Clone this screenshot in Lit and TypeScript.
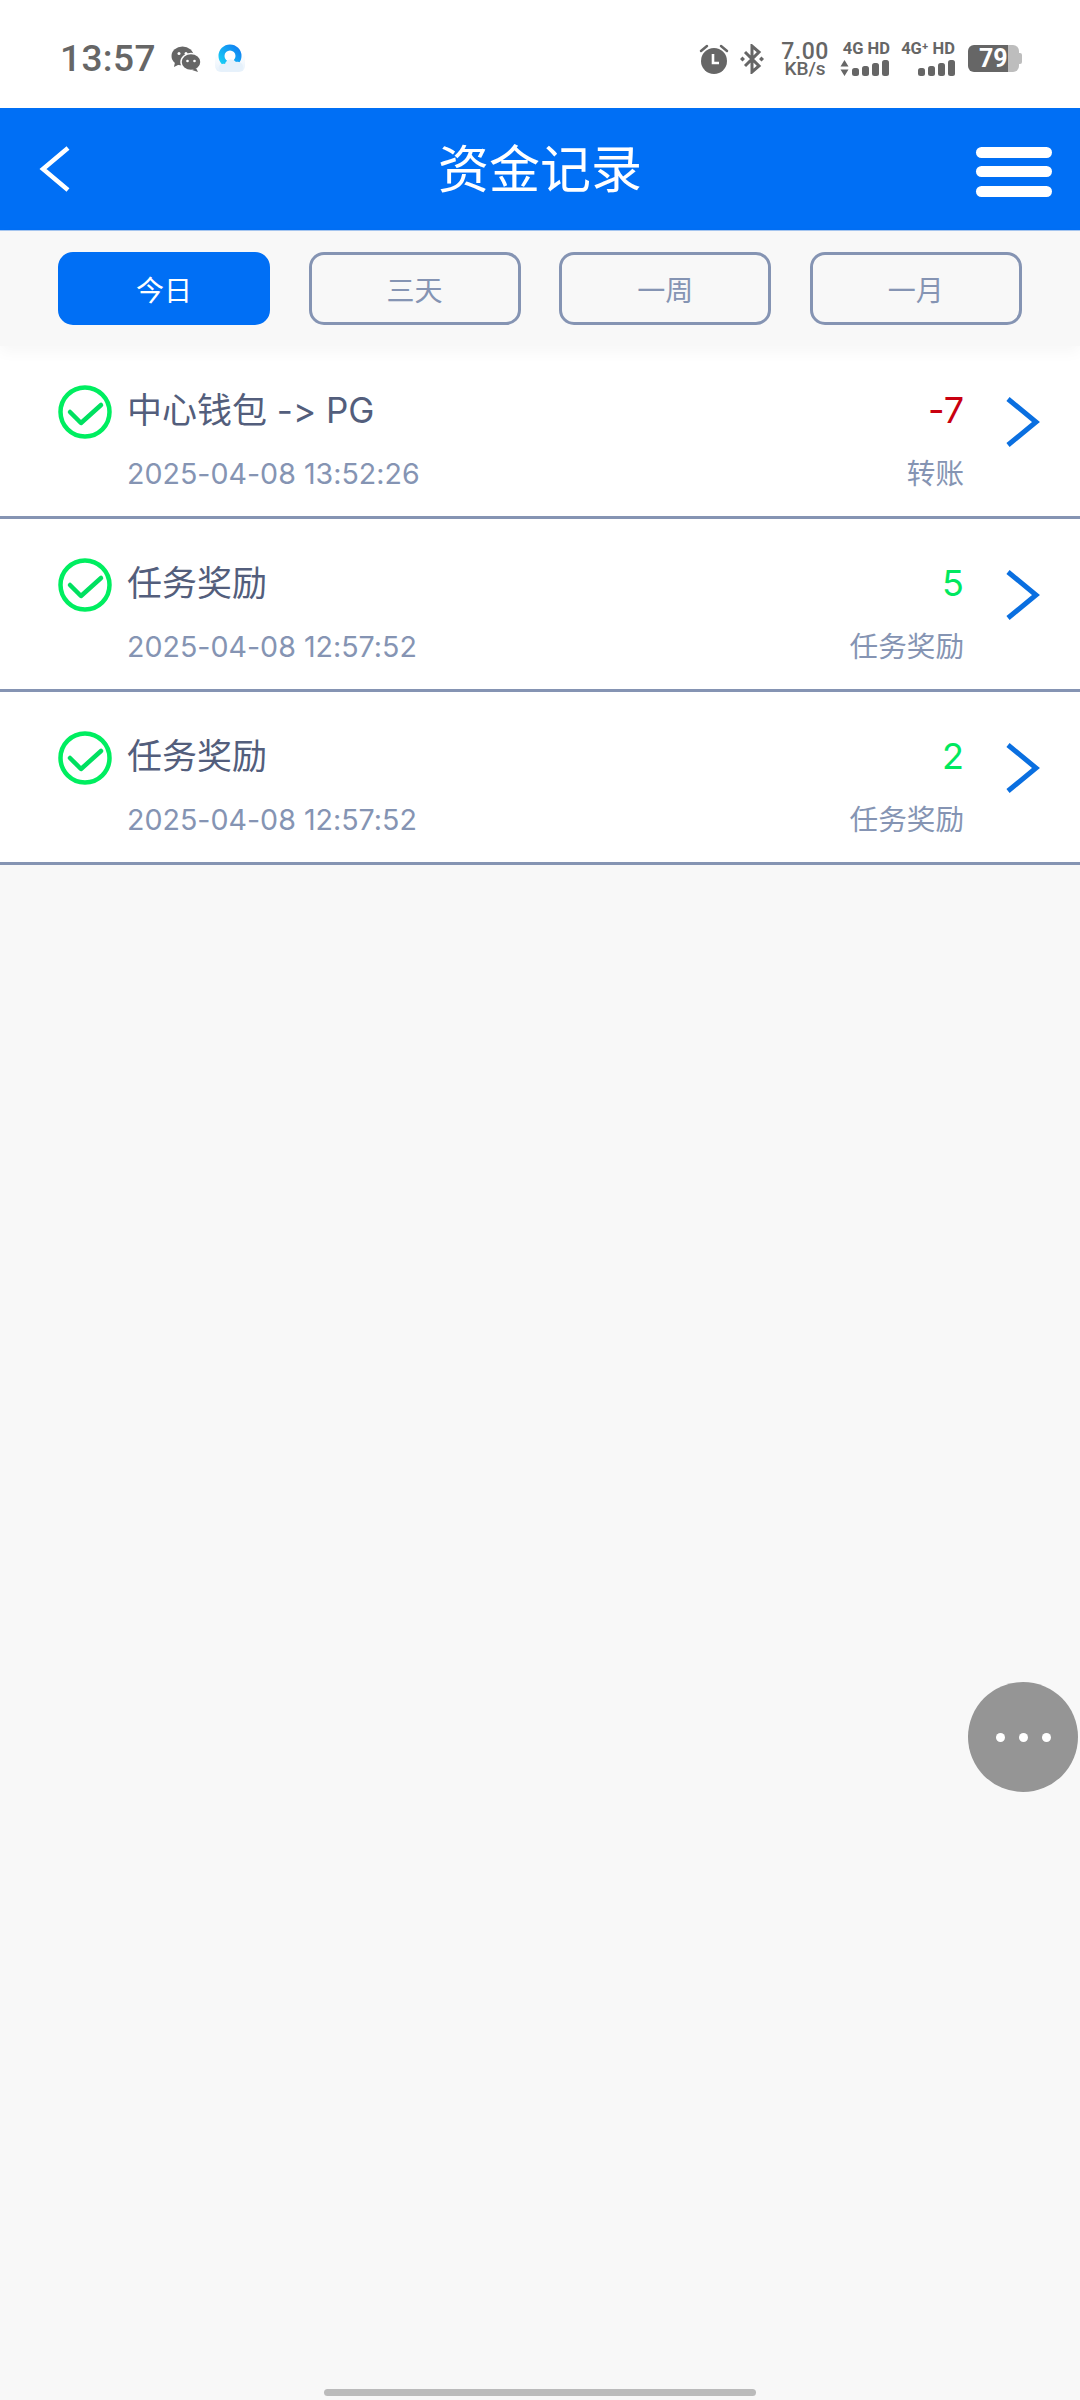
import { LitElement, html, css, svg } from 'lit';
import { customElement, state } from 'lit/decorators.js';
import { classMap } from 'lit/directives/class-map.js';

interface Rec {
  title: string;
  time: string;
  amount: string;
  kind: string;
  negative?: boolean;
}

const RECORDS: Rec[] = [
  { title: '中心钱包 -> PG', time: '2025-04-08 13:52:26', amount: '-7', kind: '转账', negative: true },
  { title: '任务奖励', time: '2025-04-08 12:57:52', amount: '5', kind: '任务奖励' },
  { title: '任务奖励', time: '2025-04-08 12:57:52', amount: '2', kind: '任务奖励' },
];

const TABS = ['今日', '三天', '一周', '一月'];

const bars = svg`
  <rect x="0" y="8" width="7" height="8" rx="2.5"></rect>
  <rect x="10" y="6" width="7" height="10" rx="2.5"></rect>
  <rect x="20" y="3" width="7" height="13" rx="2.5"></rect>
  <rect x="30" y="0" width="7" height="16" rx="2.5"></rect>
`;

@customElement('app-root')
export class AppRoot extends LitElement {
  static override styles = css`
    :host {
      display: flex;
      flex-direction: column;
      width: 1080px;
      height: 2400px;
      position: relative;
      overflow: hidden;
      background: #f8f8f8;
      font-family: Inter, 'Noto Sans CJK SC', sans-serif;
      /* Inter would turn "->" into an arrow */
      font-variant-ligatures: none;
      font-feature-settings: 'calt' 0, 'liga' 0;
    }

    /* status bar */
    .status {
      height: 108px;
      flex: none;
      box-sizing: border-box;
      background: #fff;
      display: flex;
      align-items: center;
      padding: 9px 58px 0 60px;
      color: #666;
    }
    .time {
      font-family: Roboto, sans-serif;
      font-size: 37px;
      font-weight: 500;
      width: 111px;
      line-height: 1;
      letter-spacing: 0.4px;
    }
    .wechat { width: 30px; height: 26px; margin-right: 14px; }
    .qq { width: 30px; height: 30px; margin-bottom: 3px; }
    .status-right { margin-left: auto; display: flex; align-items: center; }
    .alarm { width: 30px; height: 30px; margin-right: 9px; }
    .bt { width: 28px; height: 30px; margin-right: 15px; }
    .speed {
      display: flex;
      flex-direction: column;
      align-items: center;
      width: 48px;
      font-family: Roboto, sans-serif;
      color: #666;
      margin-right: 11px;
    }
    .speed b { font-size: 23px; font-weight: 500; line-height: 19px; letter-spacing: 0.5px; }
    .speed span { font-size: 19px; font-weight: 500; line-height: 15px; }
    .net {
      display: flex;
      flex-direction: column;
      align-items: flex-end;
      width: 50px;
      margin-right: 8px;
    }
    .net.second { width: 57px; margin-right: 13px; }
    .net span {
      font-family: Roboto, sans-serif;
      font-size: 16.5px;
      font-weight: 700;
      line-height: 16px;
      white-space: nowrap;
    }
    .net svg { display: block; margin-top: 3px; fill: #666; }
    .battery {
      position: relative;
      display: flex;
      width: 54px;
      height: 27px;
    }
    .battery .fill { width: 40px; background: #666; border-radius: 6px 0 0 6px; }
    .battery .rest { width: 11px; background: #bdbdbd; border-radius: 0 6px 6px 0; }
    .battery .cap {
      width: 3px;
      height: 11px;
      margin-top: 8px;
      background: #bdbdbd;
      border-radius: 0 2px 2px 0;
    }
    .battery span {
      position: absolute;
      left: 11px;
      top: 0;
      font-family: Roboto, sans-serif;
      font-size: 25px;
      font-weight: 700;
      line-height: 27px;
      color: #fff;
    }

    /* header */
    .header {
      height: 123px;
      flex: none;
      box-sizing: border-box;
      background: #006ff5;
      border-bottom: 1px solid #a6c6f0;
      display: flex;
      align-items: center;
      padding: 0 28px;
    }
    .back { width: 76px; height: 48px; }
    .header h1 {
      margin: 0;
      flex: 1;
      text-align: center;
      font-size: 51px;
      font-weight: 400;
      line-height: 1;
      color: #fff;
    }
    .menu {
      width: 76px;
      margin-top: 5px;
      display: flex;
      flex-direction: column;
      gap: 8.5px;
    }
    .menu i { display: block; height: 11px; border-radius: 6px; background: #fff; }

    /* tabs */
    .tabs {
      flex: none;
      height: 115px;
      box-sizing: border-box;
      padding: 21px 58px 0;
      display: grid;
      grid-template-columns: repeat(4, 212px);
      column-gap: 38.6px;
      background: #f8f8f8;
      position: relative;
      z-index: 1;
      box-shadow: 0 6px 14px rgba(0, 0, 0, 0.035);
    }
    .tab {
      height: 73px;
      box-sizing: border-box;
      border: 3px solid #8594b3;
      border-radius: 15px;
      display: flex;
      align-items: center;
      justify-content: center;
      font-size: 28px;
      color: #8594b3;
    }
    .tab.on { background: #006ff5; border-color: #006ff5; color: #fff; }

    /* records */
    .list { flex: none; background: #fff; }
    .row {
      height: 173px;
      box-sizing: border-box;
      border-bottom: 3px solid #8594b3;
      display: flex;
      align-items: flex-start;
      padding: 39px 40px 0 58px;
    }
    .check { width: 54px; height: 54px; flex: none; margin-right: 15px; }
    .body { flex: 1; min-width: 0; }
    .line { display: flex; justify-content: space-between; align-items: center; }
    .title { font-size: 35px; line-height: 50px; color: #535e7c; }
    .amount { font-size: 36px; line-height: 50px; color: #00e85f; }
    .amount.neg { color: #c90010; }
    .sub { margin-top: 19px; }
    .date, .kind { font-size: 28.6px; line-height: 40px; color: #8594b3; }
    .arrow { width: 36px; height: 52px; flex: none; margin: 11px 0 0 40px; }

    /* floating button */
    .fab {
      position: absolute;
      left: 968px;
      top: 1682px;
      width: 110px;
      height: 110px;
      border-radius: 50%;
      background: #959595;
      display: flex;
      align-items: center;
      justify-content: center;
      gap: 14px;
    }
    .fab i { width: 9px; height: 9px; border-radius: 50%; background: #fff; }

    .home {
      margin: auto auto 4px;
      width: 432px;
      height: 7px;
      border-radius: 4px;
      background: #bbb;
    }
  `;

  @state() private active = 0;

  private renderStatus() {
    return html`
      <div class="status">
        <span class="time">13:57</span>
        <svg class="wechat" viewBox="0 0 30 26">
          <ellipse cx="11.5" cy="10" rx="11" ry="9.5" fill="#666"></ellipse>
          <path d="M4 16l-1 5 6-3z" fill="#666"></path>
          <ellipse cx="20" cy="16" rx="10" ry="8.5" fill="#666" stroke="#fff" stroke-width="1.5"></ellipse>
          <path d="M25 22l2 4-6-2z" fill="#666"></path>
          <circle cx="8" cy="7.5" r="1.5" fill="#fff"></circle>
          <circle cx="15" cy="7.5" r="1.5" fill="#fff"></circle>
          <circle cx="16.5" cy="15" r="1.3" fill="#fff"></circle>
          <circle cx="23.5" cy="15" r="1.3" fill="#fff"></circle>
        </svg>
        <svg class="qq" viewBox="0 0 30 30">
          <defs>
            <linearGradient id="qqg" x1="0" y1="1" x2="1" y2="0">
              <stop offset="0" stop-color="#19d0f5"></stop>
              <stop offset="1" stop-color="#1181f2"></stop>
            </linearGradient>
            <linearGradient id="qqbg" x1="0" y1="0" x2="0" y2="1">
              <stop offset="0.4" stop-color="#ffffff"></stop>
              <stop offset="1" stop-color="#e6f1fb"></stop>
            </linearGradient>
          </defs>
          <rect width="30" height="30" rx="6" fill="url(#qqbg)"></rect>
          <circle cx="15" cy="14" r="8.5" fill="#fff" stroke="url(#qqg)" stroke-width="6"></circle>
          <path d="M5 29c-3-4 0-8 5-7 1-5 8-6 11-2 5-1 9 3 6 9z" fill="#e6f1fb"></path>
        </svg>
        <div class="status-right">
          <svg class="alarm" viewBox="0 0 30 30">
            <circle cx="15" cy="17" r="13" fill="#666"></circle>
            <path d="M2 7l6-5M28 7l-6-5" stroke="#666" stroke-width="2.5" stroke-linecap="round"></path>
            <path d="M14 10v9h6" fill="none" stroke="#fff" stroke-width="2.6"></path>
          </svg>
          <svg class="bt" viewBox="0 0 28 30">
            <path d="M7 8l14 14-7 6V2l7 6L7 22" fill="none" stroke="#666" stroke-width="3"></path>
            <path d="M2 15l2.5-2.5L7 15l-2.500 2.500zM21 15l2.500-2.500L26 15l-2.500 2.500z" fill="#666"></path>
          </svg>
          <div class="speed"><b>7.00</b><span>KB/s</span></div>
          <div class="net">
            <span>4G HD</span>
            <svg width="50" height="16" viewBox="0 0 50 16">
              <path d="M4.500 0l4 6.500h-8zM4.500 16l4-6.500h-8z"></path>
              <g transform="translate(12 0)">${bars}</g>
            </svg>
          </div>
          <div class="net second">
            <span>4G⁺ HD</span>
            <svg width="37" height="16" viewBox="0 0 37 16">${bars}</svg>
          </div>
          <div class="battery">
            <div class="fill"></div>
            <div class="rest"></div>
            <div class="cap"></div>
            <span>79</span>
          </div>
        </div>
      </div>
    `;
  }

  private renderRow(r: Rec) {
    return html`
      <div class="row">
        <svg class="check" viewBox="0 0 54 54">
          <circle cx="27" cy="27" r="24.500" fill="none" stroke="#00ee60" stroke-width="4.500"></circle>
          <path d="M12 27l11 11 20-18" fill="none" stroke="#00e060" stroke-width="4.500" stroke-linecap="round" stroke-linejoin="round"></path>
        </svg>
        <div class="body">
          <div class="line">
            <span class="title">${r.title}</span>
            <span class=${classMap({ amount: true, neg: !!r.negative })}>${r.amount}</span>
          </div>
          <div class="line sub">
            <span class="date">${r.time}</span>
            <span class="kind">${r.kind}</span>
          </div>
        </div>
        <svg class="arrow" viewBox="0 0 36 52">
          <path d="M4 3l28 23L4 49" fill="none" stroke="#0a6fe0" stroke-width="5"></path>
        </svg>
      </div>
    `;
  }

  override render() {
    return html`
      ${this.renderStatus()}
      <div class="header">
        <svg class="back" viewBox="0 0 76 48">
          <path d="M40 3L15 24l25 21" fill="none" stroke="#fff" stroke-width="4.500"></path>
        </svg>
        <h1>资金记录</h1>
        <div class="menu"><i></i><i></i><i></i></div>
      </div>
      <div class="tabs">
        ${TABS.map(
          (t, i) => html`
            <div
              class=${classMap({ tab: true, on: i === this.active })}
              @click=${() => (this.active = i)}
            >${t}</div>
          `
        )}
      </div>
      <div class="list">${RECORDS.map(r => this.renderRow(r))}</div>
      <div class="home"></div>
      <div class="fab"><i></i><i></i><i></i></div>
    `;
  }
}

declare global {
  interface HTMLElementTagNameMap {
    'app-root': AppRoot;
  }
}
